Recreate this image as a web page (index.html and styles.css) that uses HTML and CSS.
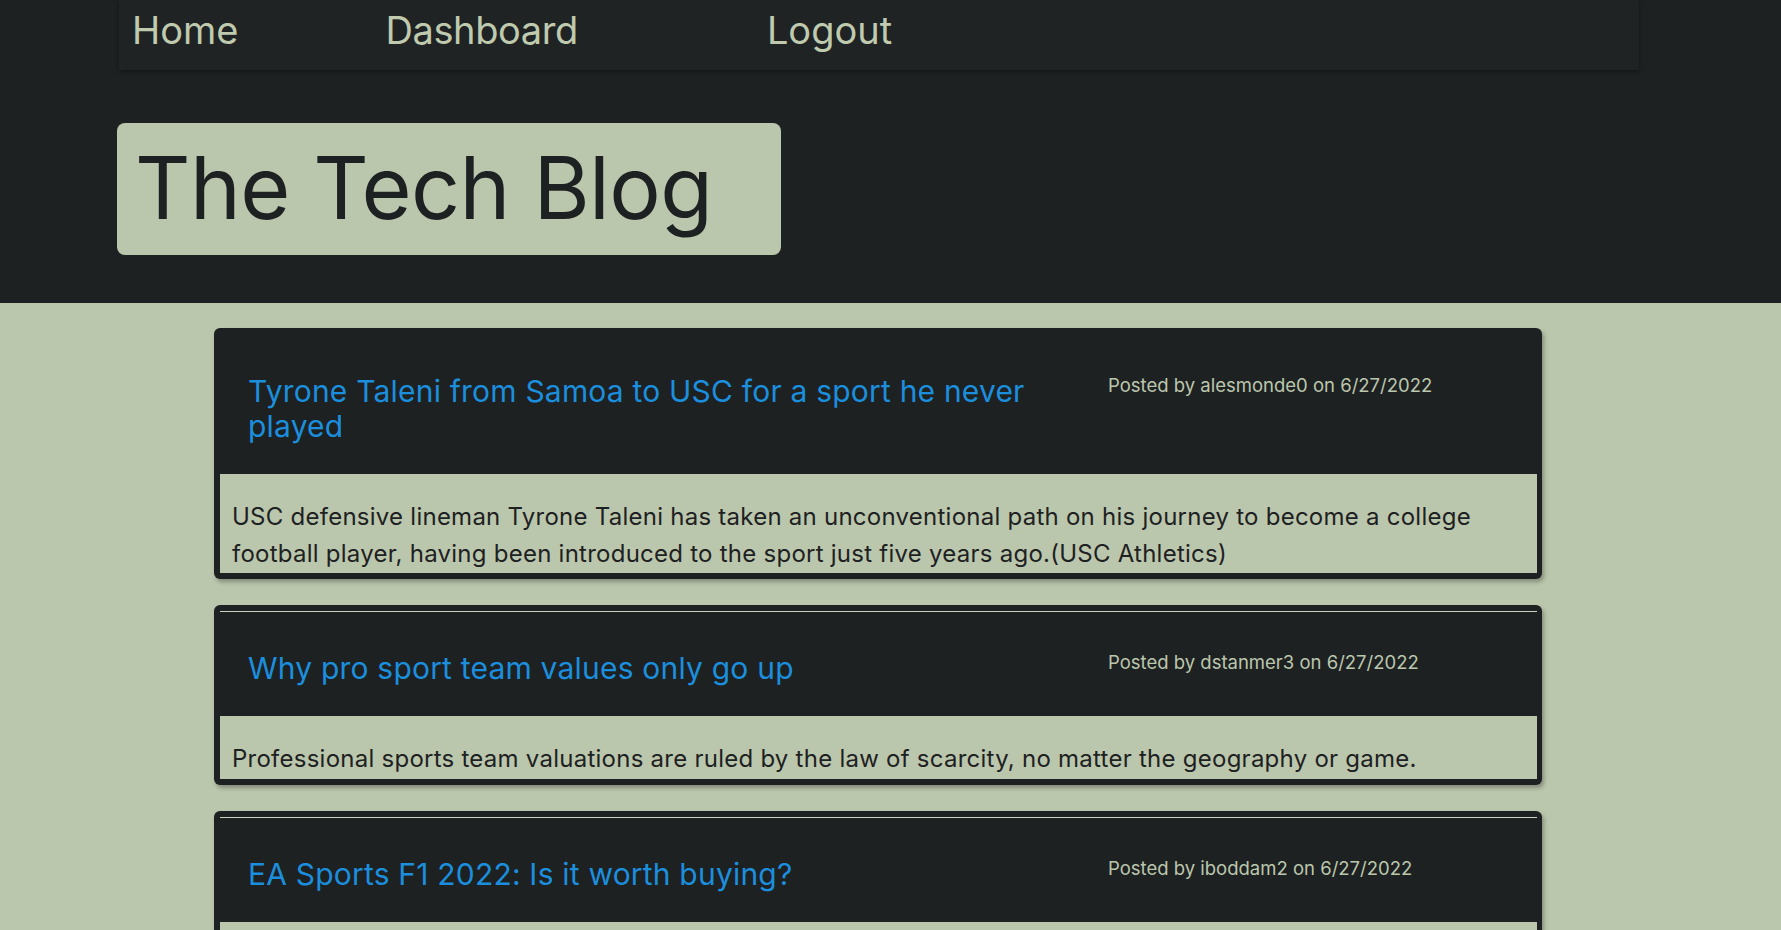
FILE: index.html
```html
<!DOCTYPE html>
<html lang="en">
<head>
<meta charset="utf-8">
<title>The Tech Blog</title>
<link rel="stylesheet" href="styles.css">
</head>
<body>
<header class="site-header">
  <nav class="navbar">
    <a class="nav-link nav-home" href="#">Home</a>
    <a class="nav-link nav-dash" href="#">Dashboard</a>
    <a class="nav-link nav-logout" href="#">Logout</a>
  </nav>
  <div class="brand"><h1 class="brand-title">The Tech Blog</h1></div>
</header>
<main class="posts">
  <article class="post">
    <div class="post-head">
      <h2 class="post-title"><a href="#">Tyrone Taleni from Samoa to USC for a sport he never played</a></h2>
      <p class="post-meta">Posted by alesmonde0 on 6/27/2022</p>
    </div>
    <div class="post-body"><p>USC defensive lineman Tyrone Taleni has taken an unconventional path on his journey to become a college football player, having been introduced to the sport just five years ago.(USC Athletics)</p></div>
  </article>
  <article class="post">
    <hr class="post-rule">
    <div class="post-head">
      <h2 class="post-title"><a href="#">Why pro sport team values only go up</a></h2>
      <p class="post-meta">Posted by dstanmer3 on 6/27/2022</p>
    </div>
    <div class="post-body"><p>Professional sports team valuations are ruled by the law of scarcity, no matter the geography or game.</p></div>
  </article>
  <article class="post">
    <hr class="post-rule">
    <div class="post-head">
      <h2 class="post-title"><a href="#">EA Sports F1 2022: Is it worth buying?</a></h2>
      <p class="post-meta">Posted by iboddam2 on 6/27/2022</p>
    </div>
    <div class="post-body"><p>F1 22 brings the new era of Formula 1 to the track, with redesigned cars and a refreshed handling model.</p></div>
  </article>
</main>
</body>
</html>
```
FILE: styles.css
```css
* { box-sizing: border-box; }
html, body { margin: 0; padding: 0; }
body {
  background: #bbc7ad;
  font-family: Inter, "Liberation Sans", sans-serif;
  color: #1e2122;
}
.site-header {
  background: #1e2122;
  height: 303px;
}
.navbar {
  margin-left: 119px;
  width: 1520px;
  height: 70px;
  padding: 11px 0 0 13px;
  background: #1f2324;
  box-shadow: 0 2px 4px rgba(0, 0, 0, 0.35);
  display: flex;
  align-items: flex-start;
}
.nav-link {
  color: #bfcaae;
  text-decoration: none;
  font-size: 38px;
  line-height: 38px;
}
.nav-home { margin-right: 147px; }
.nav-dash { margin-right: 189px; letter-spacing: -0.4px; }
.brand {
  margin: 53px 0 0 117px;
  width: 664px;
  height: 132px;
  background: #bbc7ad;
  border-radius: 8px;
  padding: 22px 0 0 18px;
}
.brand-title {
  margin: 0;
  font-size: 86px;
  line-height: 86px;
  font-weight: 400;
  letter-spacing: -0.6px;
  color: #1e2122;
}
.posts {
  padding: 25px 0 0 214px;
  display: flex;
  flex-direction: column;
  gap: 26px;
}
.post {
  width: 1328px;
  background: #1e2122;
  border-radius: 6px;
  padding: 0 5px 6px 6px;
  box-shadow: 2px 3px 4px rgba(0, 0, 0, 0.3);
}
.post-rule {
  margin: 6px 0 0;
  border: 0;
  height: 1px;
  background: #c9d3bd;
}
.post-head {
  display: flex;
  align-items: flex-start;
  padding: 46px 0 30px;
}
.post-rule + .post-head { padding-top: 39px; }
.post-title {
  width: 66.666%;
  margin: 0;
  padding: 0 40px 0 28px;
  font-size: 30px;
  line-height: 1.16;
  font-weight: 400;
  letter-spacing: 0.2px;
}
.post-title a { color: #1b8fdd; text-decoration: none; }
.post-meta {
  margin: 0;
  padding-left: 10px;
  font-size: 18.5px;
  line-height: 1.2;
  color: #bbc7ad;
}
.post-body {
  background: #bbc7ad;
  padding: 24px 14px 1px 12px;
}
.post-body p {
  margin: 0;
  font-size: 24px;
  line-height: 1.56;
  letter-spacing: 0.25px;
  color: #1e2122;
}
```
